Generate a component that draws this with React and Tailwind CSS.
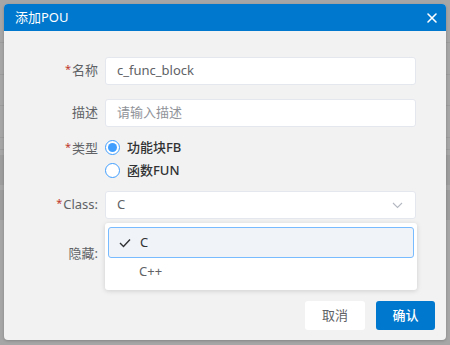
import { useState } from 'react';

const font = { fontFamily: '"Noto Sans", "Noto Sans CJK SC", sans-serif' };

const Label = ({ required, children }) => (
  <div className="w-[96px] shrink-0 pr-[2px] text-right text-[13px] text-[#606266]">
    {required && <span className="relative top-[-2px] mr-[1px] text-[11px] text-[#c0392b]">*</span>}
    {children}
  </div>
);

const Radio = ({ checked, label }) => (
  <label className="flex h-[23px] items-center gap-[7px]">
    <span className="flex h-[15px] w-[15px] items-center justify-center rounded-full border border-[#409eff] bg-white">
      {checked && <span className="h-[9px] w-[9px] rounded-full bg-[#409eff]" />}
    </span>
    <span className="text-[13px] font-medium text-[#303133]">{label}</span>
  </label>
);

export default function App() {
  const [name] = useState('c_func_block');

  return (
    <div className="relative h-[345px] w-[450px] overflow-hidden bg-[#a6a6a6]" style={font}>
      {/* page behind the mask */}
      <div className="flex flex-col">
        <div className="h-[43px] border-b border-[#9c9c9c]" />
        <div className="h-[32px] border-b border-[#9c9c9c]" />
        <div className="h-[31px] border-b border-[#9c9c9c]" />
        <div className="h-[32px] border-b border-[#9c9c9c]" />
        <div className="h-[12px] border-b border-[#9c9c9c]" />
        <div className="mt-[5px] h-[30px] bg-[#9d9d9d]" />
        <div className="mt-[5px] h-[30px] bg-[#9d9d9d]" />
      </div>

      <div className="absolute left-[4px] top-[4px] flex h-[336px] w-[442px] flex-col rounded-[4px] bg-[#f2f2f2] shadow-[0_1px_3px_rgba(0,0,0,0.2)]">
        <div className="flex h-[27px] items-center justify-between rounded-t-[4px] bg-[#0078cd] pl-[11px] pr-[8px]">
          <span className="text-[13px] text-white">添加POU</span>
          <svg width="12" height="12" viewBox="0 0 12 12" stroke="white" strokeWidth="1.6" strokeLinecap="round">
            <path d="M2 2l8 8M10 2l-8 8" />
          </svg>
        </div>

        <div className="relative flex flex-col pr-[30px] pt-[26px]">
          <div className="flex h-[28px] items-center">
            <Label required>名称</Label>
            <div className="ml-[5px] flex h-[28px] flex-1 items-center rounded-[3px] border border-[#e4e7ed] bg-white px-[11px] text-[13px] text-[#606266]">
              {name}
            </div>
          </div>

          <div className="mt-[14px] flex h-[28px] items-center">
            <Label>描述</Label>
            <div className="ml-[5px] flex h-[28px] flex-1 items-center rounded-[3px] border border-[#e4e7ed] bg-white px-[11px] text-[13px] text-[#909399]">
              请输入描述
            </div>
          </div>

          <div className="mt-[9px] flex">
            <div className="pt-[3px]">
              <Label required>类型</Label>
            </div>
            <div className="ml-[5px] flex flex-col">
              <Radio checked label="功能块FB" />
              <Radio label="函数FUN" />
            </div>
          </div>

          <div className="mt-[9px] flex h-[28px] items-center">
            <Label required>Class:</Label>
            <div className="ml-[5px] flex h-[28px] flex-1 items-center justify-between rounded-[3px] border border-[#e4e7ed] bg-white pl-[11px] pr-[12px] text-[13px] text-[#606266]">
              <span>C</span>
              <svg width="11" height="7" viewBox="0 0 11 7" fill="none" stroke="#b4b8c0" strokeWidth="1.1">
                <path d="M1 1l4.5 4.5L10 1" />
              </svg>
            </div>
          </div>

          <div className="mt-[21px] flex h-[28px] items-center">
            <Label>隐藏:</Label>
            <div className="flex-1" />
          </div>

          <div className="absolute left-[101px] right-[29px] top-[192px] z-10 flex flex-col rounded-[3px] bg-white px-[3px] pb-[4px] pt-[4px] shadow-[0_1px_5px_rgba(0,0,0,0.15)]">
            <div className="flex h-[31px] items-center gap-[9px] rounded-[3px] border border-[#79bbff] bg-[#f0f3f8] pl-[10px] text-[13px] text-[#303133]">
              <svg width="12" height="10" viewBox="0 0 12 10" fill="none" stroke="#303133" strokeWidth="1.4">
                <path d="M1 5l3.5 3.5L11 1.5" />
              </svg>
              <span>C</span>
            </div>
            <div className="flex h-[28px] items-center pl-[31px] text-[13px] text-[#606266]">C++</div>
          </div>
        </div>

        <div className="mt-auto flex justify-end gap-[11px] pb-[10px] pr-[11px]">
          <button className="h-[29px] w-[60px] rounded-[3px] bg-white text-[13px] text-[#606266]">取消</button>
          <button className="h-[29px] w-[59px] rounded-[3px] bg-[#0078cd] text-[13px] font-medium text-white">确认</button>
        </div>
      </div>
    </div>
  );
}
